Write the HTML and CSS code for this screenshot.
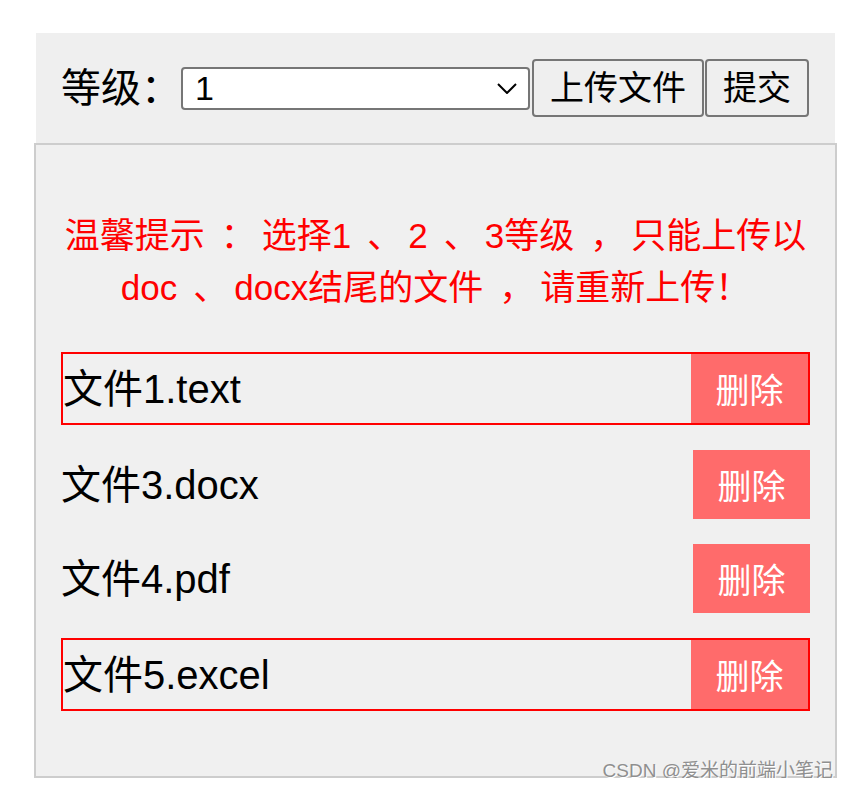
FILE: index.html
```html
<!DOCTYPE html>
<html lang="zh-CN">
  <head>
    <meta charset="UTF-8" />
    <meta name="viewport" content="width=device-width, initial-scale=1.0" />
    <title>文件上传</title>
    <link rel="stylesheet" href="styles.css">
  </head>
  <body>
    <div class="page">
      <div class="toolbar">
        <label class="toolbar-label" for="level">等级：</label>
        <div class="select-wrap">
          <select id="level" name="level" class="level-select">
            <option value="1" selected>1</option>
            <option value="2">2</option>
            <option value="3">3</option>
            <option value="4">4</option>
          </select>
          <svg class="select-arrow" width="20" height="11" viewBox="0 0 20 11">
            <path d="M1 1l9 9 9-9" />
          </svg>
        </div>
        <button class="tool-btn">上传文件</button>
        <button class="tool-btn">提交</button>
      </div>

      <div class="panel">
        <p class="tip">温馨提示<span class="punct">：</span>选择1<span class="punct">、</span>2<span class="punct">、</span>3等级<span class="punct">，</span>只能上传以<br />doc<span class="punct">、</span>docx结尾的文件<span class="punct">，</span>请重新上传！</p>
        <ul class="file-list">
          <li class="file-item file-item-error">
            <span class="file-name">文件1.text</span>
            <button class="del-btn">删除</button>
          </li>
          <li class="file-item">
            <span class="file-name">文件3.docx</span>
            <button class="del-btn">删除</button>
          </li>
          <li class="file-item">
            <span class="file-name">文件4.pdf</span>
            <button class="del-btn">删除</button>
          </li>
          <li class="file-item file-item-error">
            <span class="file-name">文件5.excel</span>
            <button class="del-btn">删除</button>
          </li>
        </ul>
      </div>

      <span class="watermark">CSDN @爱米的前端小笔记</span>
    </div>
  </body>
</html>
```

FILE: styles.css
```css
html,
body {
  margin: 0;
  padding: 0;
  background: #fff;
}
body {
  font-family: "Liberation Sans", "Noto Sans CJK SC", sans-serif;
  color: #000;
}
.page {
  position: relative;
  width: 803px;
  margin: 33px 0 0 34px;
}
.toolbar {
  display: flex;
  align-items: center;
  margin: 0 2px;
  padding: 26px 25px;
  background: #efefef;
  white-space: nowrap;
}
.toolbar > * {
  flex-shrink: 0;
}
.toolbar-label {
  width: 120px;
  font-size: 40px;
  line-height: 58px;
}
.select-wrap {
  position: relative;
  display: flex;
}
.level-select {
  appearance: none;
  -webkit-appearance: none;
  width: 349px;
  height: 43px;
  box-sizing: border-box;
  padding: 0 40px 0 12px;
  border: 2px solid #767676;
  border-radius: 4px;
  background: #fff;
  font-family: "Liberation Sans", "Noto Sans CJK SC", sans-serif;
  font-size: 34px;
  color: #000;
}
.select-arrow {
  position: absolute;
  top: 16px;
  right: 13px;
  fill: none;
  stroke: #000;
  stroke-width: 2;
  pointer-events: none;
}
.tool-btn {
  height: 58px;
  box-sizing: border-box;
  margin-left: 2px;
  padding: 0 16px;
  border: 2px solid #767676;
  border-radius: 4px;
  background: #efefef;
  font-family: "Liberation Sans", "Noto Sans CJK SC", sans-serif;
  font-size: 34px;
  line-height: 50px;
  color: #000;
}
.tool-btn + .tool-btn {
  margin-left: 1px;
}
.panel {
  padding: 65px 25px;
  border: 2px solid #cdcdcd;
  background: #f0f0f0;
}
.tip {
  margin: 0 0 38px;
  font-size: 35px;
  line-height: 52px;
  text-align: center;
  color: #ff0000;
}
.tip .punct {
  margin: 0 6px 0 16px;
}
.file-list {
  display: flex;
  flex-direction: column;
  gap: 25px;
  margin: 0;
  padding: 0;
  list-style: none;
}
.file-item {
  display: flex;
  align-items: center;
  justify-content: space-between;
}
.file-item-error {
  border: 2px solid #ff0000;
}
.file-name {
  font-size: 40px;
  line-height: 48px;
}
.del-btn {
  width: 117px;
  height: 69px;
  padding: 0;
  border: none;
  background: #ff6b6b;
  font-family: "Liberation Sans", "Noto Sans CJK SC", sans-serif;
  font-size: 34px;
  color: #fff;
}
.watermark {
  position: absolute;
  right: 4px;
  bottom: -4px;
  font-size: 19px;
  color: #8f8f8f;
  text-shadow: 1px 1px 0 #fff;
  white-space: nowrap;
}
```
